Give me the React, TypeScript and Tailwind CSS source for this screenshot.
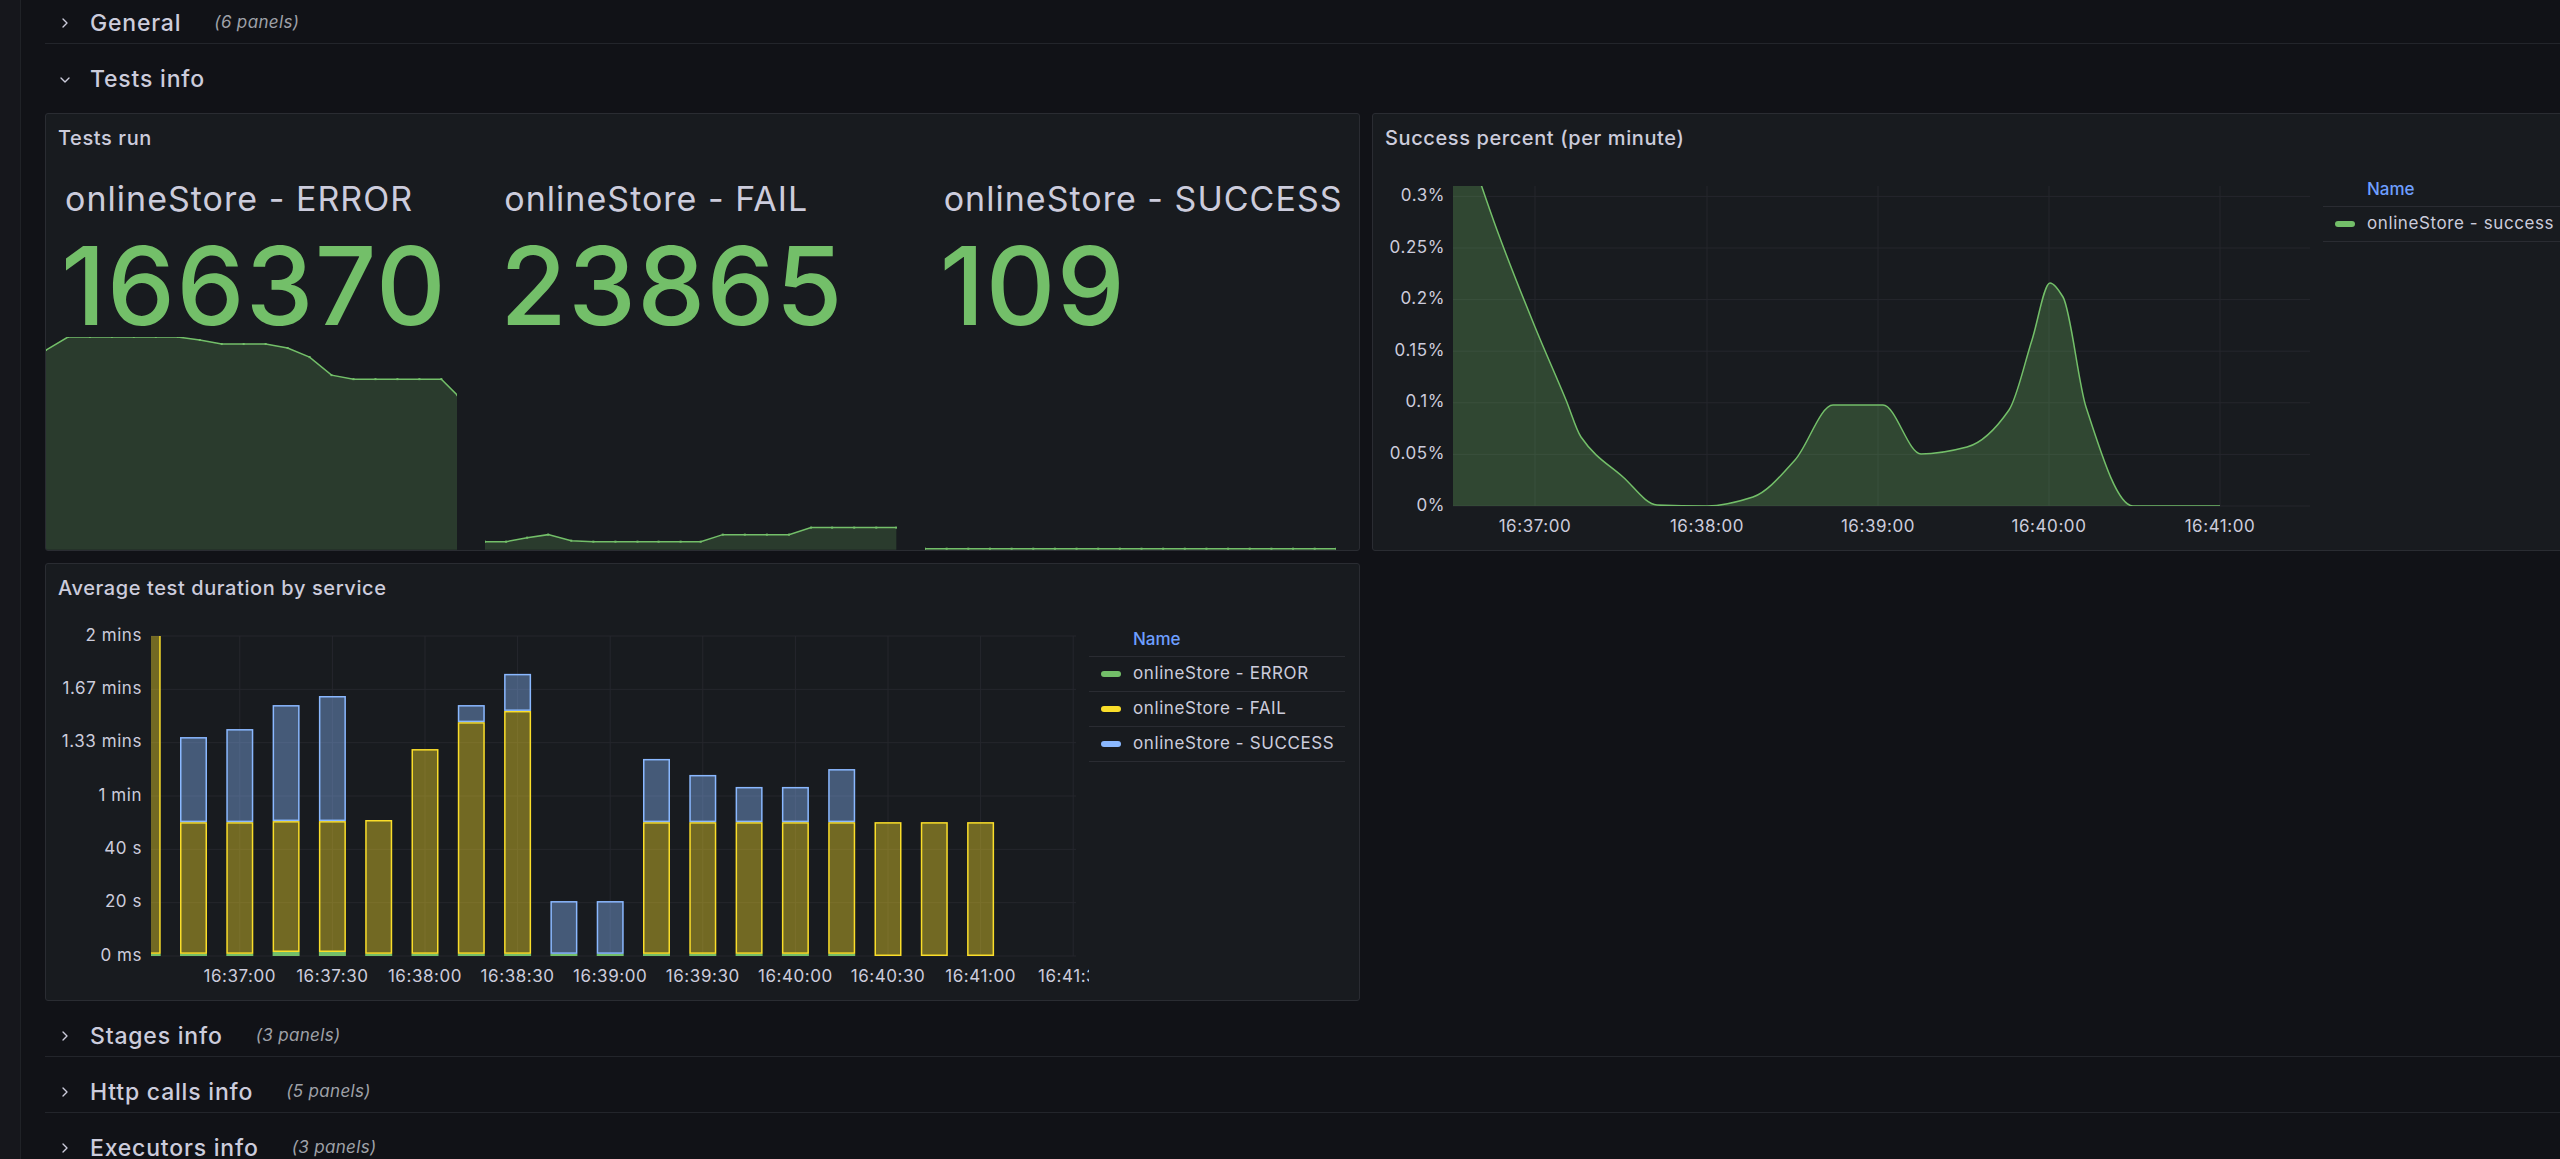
import React from 'react';
import { ChevronRight, ChevronDown } from 'lucide-react';

type Pt = [number, number];

const GREEN = '#73bf69';
const YELLOW = '#fade2a';
const BLUE = '#8ab8ff';
const GRID = '#25272d';

// monotone cubic path, same idea as d3.curveMonotoneX
const monotone = (pts: Pt[]) => {
  const n = pts.length;
  const m: number[] = [];
  for (let i = 0; i < n - 1; i++) m.push((pts[i + 1][1] - pts[i][1]) / (pts[i + 1][0] - pts[i][0]));
  const t = pts.map((_, i) => {
    if (i === 0) return m[0];
    if (i === n - 1) return m[n - 2];
    if (m[i - 1] * m[i] <= 0) return 0;
    const h0 = pts[i][0] - pts[i - 1][0];
    const h1 = pts[i + 1][0] - pts[i][0];
    return (3 * (h0 + h1)) / ((2 * h1 + h0) / m[i - 1] + (h1 + 2 * h0) / m[i]);
  });
  let d = `M${pts[0][0]},${pts[0][1]}`;
  for (let i = 0; i < n - 1; i++) {
    const [x0, y0] = pts[i];
    const [x1, y1] = pts[i + 1];
    const h = (x1 - x0) / 3;
    d += ` C${x0 + h},${y0 + t[i] * h} ${x1 - h},${y1 - t[i + 1] * h} ${x1},${y1}`;
  }
  return d;
};

const RowHeader = ({ title, count, open }: { title: string; count?: number; open?: boolean }) => (
  <div className={open ? 'flex h-[56px] items-center pt-[15px]' : 'flex h-[56px] items-center border-b border-[#23252b] pt-[15px]'}>
    <div className="ml-[12px] flex w-[16px] justify-center text-[#ccccdc]">
      {open ? <ChevronDown size={16} strokeWidth={2} /> : <ChevronRight size={16} strokeWidth={2} />}
    </div>
    <span className="ml-[17px] text-[23px] font-medium tracking-[0.035em] text-[#ccccdc]">{title}</span>
    {count !== undefined && <span className="ml-[33px] text-[17px] italic tracking-[0.02em] text-[#9fa1a8]">({count} panels)</span>}
  </div>
);

const Panel = ({ title, children }: { title: string; children: React.ReactNode }) => (
  <div className="flex h-[438px] flex-col overflow-hidden rounded-[3px] border border-[#2a2c32] bg-[#181b1f]">
    <div className="flex h-[47px] shrink-0 items-center pl-[12px] text-[20px] font-medium tracking-[0.03em] text-[#ccccdc]">{title}</div>
    <div className="flex min-h-0 flex-1">{children}</div>
  </div>
);

const Legend = ({ items }: { items: { name: string; color: string }[] }) => (
  <div className="flex-1 pr-[14px] pt-[12px]">
    <div className="flex h-[34px] items-center border-b border-[#2a2c32] pl-[44px] text-[17px] font-medium text-[#6e9fff]">Name</div>
    {items.map((it) => (
      <div key={it.name} className="flex h-[35px] items-center border-b border-[#2a2c32] pl-[12px]">
        <span className="h-[6px] w-[20px] rounded-full" style={{ backgroundColor: it.color }} />
        <span className="ml-[12px] whitespace-nowrap text-[17px] tracking-[0.035em] text-[#ccccdc]">{it.name}</span>
      </div>
    ))}
  </div>
);

const spark1: Pt[] = [[0, 13], [22, 0], [44, 0], [66, 0], [88, 0], [110, 0], [132, 0], [154, 3], [176, 7], [198, 7], [220, 7], [242, 11], [264, 20], [286, 38], [308, 42], [330, 42], [352, 42], [374, 42], [396, 42], [412, 58]];
const spark2: Pt[] = [[0, 204], [21, 204], [42, 200], [63, 197], [86, 203], [108, 204], [130, 204], [152, 204], [173, 204], [195, 204], [215, 204], [237, 197], [259, 197], [281, 197], [303, 197], [325, 190], [346, 190], [368, 190], [390, 190], [410, 190]];
const spark3: Pt[] = Array.from({ length: 20 }, (_, i) => [i * (412 / 19), 211] as Pt);

const Sparkline = ({ pts }: { pts: Pt[] }) => {
  const w = pts[pts.length - 1][0];
  const line = pts.map((p, i) => `${i ? 'L' : 'M'}${p[0]},${p[1]}`).join(' ');
  return (
    <svg className="block h-full w-full" viewBox={`0 0 ${w} 213`} preserveAspectRatio="none">
      <path d={`${line} L${w},212 L0,212 Z`} fill={GREEN} fillOpacity={0.2} />
      <path d={line} fill="none" stroke={GREEN} strokeWidth={1.5} vectorEffect="non-scaling-stroke" />
      {pts.map((p, i) => (
        <rect key={i} x={p[0] - 1} y={p[1] - 1} width={2} height={2} fill={GREEN} />
      ))}
    </svg>
  );
};

const stats = [
  { name: 'onlineStore - ERROR', value: '166370', pts: spark1 },
  { name: 'onlineStore - FAIL', value: '23865', pts: spark2 },
  { name: 'onlineStore - SUCCESS', value: '109', pts: spark3 },
];

const TestsRun = () => (
  <Panel title="Tests run">
    <div className="grid w-full grid-cols-3 gap-[28px] pr-[23px]">
      {stats.map((s) => (
        <div key={s.name} className="flex h-full min-w-0 flex-col">
          <div className="mt-[18px] whitespace-nowrap pl-[19px] text-[34px] leading-[40px] tracking-[0.03em] text-[#ccccdc]">{s.name}</div>
          <div className="mt-[13px] pl-[15px] text-[108px] font-medium leading-[108px] tracking-[0.012em] text-[#73bf69]">{s.value}</div>
          <div className="-mt-[3px] min-h-0 flex-1">
            <Sparkline pts={s.pts} />
          </div>
        </div>
      ))}
    </div>
  </Panel>
);

const successPts: Pt[] = [[80, -60], [124, 69], [162, 166], [193, 239], [208, 276], [250, 316], [284, 344], [334, 345], [380, 336], [422, 299], [460, 244], [510, 244], [548, 293], [594, 286], [636, 249], [659, 179], [677, 122], [690, 136], [713, 246], [760, 345], [847, 345]];
const pctTicks = ['0%', '0.05%', '0.1%', '0.15%', '0.2%', '0.25%', '0.3%'];
const timeTicks = [
  { x: 162, label: '16:37:00' },
  { x: 334, label: '16:38:00' },
  { x: 505, label: '16:39:00' },
  { x: 676, label: '16:40:00' },
  { x: 847, label: '16:41:00' },
];

const SuccessPercent = () => {
  const curve = monotone(successPts);
  return (
    <Panel title="Success percent (per minute)">
      <svg width={950} height={389} className="shrink-0 tracking-[0.035em]">
        <defs>
          <clipPath id="plot2">
            <rect x={80} y={25} width={857} height={320} />
          </clipPath>
        </defs>
        {pctTicks.map((t, i) => {
          const y = 345 - i * 51.6;
          return (
            <g key={t}>
              <line x1={80} x2={937} y1={y} y2={y} stroke={GRID} />
              <text x={72} y={y} textAnchor="end" dominantBaseline="middle" fontSize={17} fill="#ccccdc">{t}</text>
            </g>
          );
        })}
        {timeTicks.map((t) => (
          <g key={t.label}>
            <line x1={t.x} x2={t.x} y1={25} y2={345} stroke={GRID} />
            <text x={t.x} y={366} textAnchor="middle" dominantBaseline="middle" fontSize={17} fill="#ccccdc">{t.label}</text>
          </g>
        ))}
        <g clipPath="url(#plot2)">
          <path d={`${curve} L847,345 L80,345 Z`} fill={GREEN} fillOpacity={0.27} />
          <path d={curve} fill="none" stroke={GREEN} strokeWidth={1.5} />
        </g>
      </svg>
      <Legend items={[{ name: 'onlineStore - success', color: GREEN }]} />
    </Panel>
  );
};

// cumulative tops in seconds: error, fail, success
const bars: [number, number, number][] = [
  [0.8, 125, 125], [0.8, 50.2, 82.1], [0.8, 50.2, 85.1], [1.5, 50.6, 94.1], [1.5, 50.6, 97.5],
  [0.8, 51, 51], [0.8, 77.6, 77.6], [0.8, 87.7, 94.1], [0.8, 91.9, 105.8], [0.8, 0.8, 20.6],
  [0.8, 0.8, 20.6], [0.8, 50.2, 73.9], [0.8, 50.2, 67.9], [0.8, 50.2, 63.4], [0.8, 50.2, 63.4],
  [0.8, 50.2, 70.1], [0, 50.2, 50.2], [0, 50.2, 50.2], [0, 50.2, 50.2],
];
const durTicks = ['0 ms', '20 s', '40 s', '1 min', '1.33 mins', '1.67 mins', '2 mins'];
const barTimes = ['16:37:00', '16:37:30', '16:38:00', '16:38:30', '16:39:00', '16:39:30', '16:40:00', '16:40:30', '16:41:00', '16:41:30'];
const sy = (v: number) => 345 - v * (320 / 120);
const bx = (i: number) => 101.2 + 46.3 * i;

const Seg = ({ x, lo, hi, color }: { x: number; lo: number; hi: number; color: string }) => {
  if (hi - lo <= 0) return null;
  const y0 = sy(hi);
  const h = sy(lo) - y0;
  return <rect x={x + 0.75} y={y0 + 0.75} width={25.5} height={Math.max(h - 1.5, 0.5)} fill={color} fillOpacity={0.4} stroke={color} strokeWidth={1.5} />;
};

const AvgDuration = () => (
  <Panel title="Average test duration by service">
    <svg width={1043} height={389} className="shrink-0 tracking-[0.035em]">
      <defs>
        <clipPath id="plot3">
          <rect x={105} y={25} width={925} height={321} />
        </clipPath>
      </defs>
      {durTicks.map((t, i) => {
        const y = 345 - i * (320 / 6);
        return (
          <g key={t}>
            <line x1={105} x2={1030} y1={y} y2={y} stroke={GRID} />
            <text x={96} y={y} textAnchor="end" dominantBaseline="middle" fontSize={17} fill="#ccccdc">{t}</text>
          </g>
        );
      })}
      {barTimes.map((t, k) => {
        const x = bx(2 + k * 2);
        return (
          <g key={t}>
            <line x1={x} x2={x} y1={25} y2={345} stroke={GRID} />
            <text x={x} y={366} textAnchor="middle" dominantBaseline="middle" fontSize={17} fill="#ccccdc">{t}</text>
          </g>
        );
      })}
      <g clipPath="url(#plot3)">
        {bars.map(([e, f, s], i) => {
          const x = bx(i) - 13.5;
          return (
            <g key={i}>
              {e > 0 && <rect x={x} y={sy(e)} width={27} height={sy(0) - sy(e)} fill={GREEN} />}
              <Seg x={x} lo={e} hi={f} color={YELLOW} />
              <Seg x={x} lo={f} hi={s} color={BLUE} />
            </g>
          );
        })}
      </g>
    </svg>
    <Legend
      items={[
        { name: 'onlineStore - ERROR', color: GREEN },
        { name: 'onlineStore - FAIL', color: YELLOW },
        { name: 'onlineStore - SUCCESS', color: BLUE },
      ]}
    />
  </Panel>
);

export default function App() {
  return (
    <div className="flex h-[1159px] w-[2560px] overflow-hidden bg-[#111217] font-['Inter',sans-serif]">
      <div className="w-[21px] shrink-0 border-r border-[#202227] bg-[#16171c]" />
      <div className="min-w-0 flex-1 overflow-hidden pl-[24px]">
        <div className="-mt-[12px]">
          <RowHeader title="General" count={6} />
          <RowHeader title="Tests info" open />
          <div className="mt-[13px] grid grid-cols-[1315px_1315px] gap-[12px]">
            <TestsRun />
            <SuccessPercent />
            <AvgDuration />
          </div>
          <RowHeader title="Stages info" count={3} />
          <RowHeader title="Http calls info" count={5} />
          <RowHeader title="Executors info" count={3} />
        </div>
      </div>
    </div>
  );
}
